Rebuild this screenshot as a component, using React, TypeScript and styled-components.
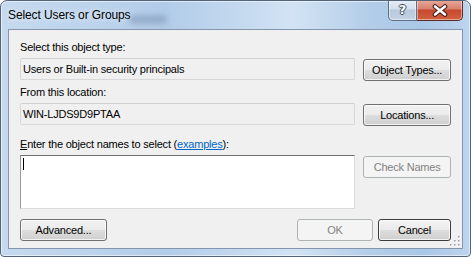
import React from "react";
import styled, { createGlobalStyle } from "styled-components";

const Global = createGlobalStyle`
  html, body { margin: 0; padding: 0; background: #ffffff; }
  body { font-family: "Liberation Sans", Arial, sans-serif; }
  * { box-sizing: border-box; }
`;

const Window = styled.div`
  width: 471px;
  height: 257px;
  border: 1px solid #53657b;
  border-radius: 7px 7px 4px 4px;
  background: linear-gradient(
    to right,
    #c6d9ef 0%,
    #bcd3ec 20%,
    #b1cce9 35%,
    #c9dcf1 55%,
    #d3e3f4 62%,
    #b4cee9 78%,
    #a9c7e7 90%,
    #bdd4ed 100%
  );
  box-shadow: inset 0 0 0 1px rgba(255, 255, 255, 0.55);
  display: flex;
  flex-direction: column;
  overflow: hidden;
`;

const TitleBar = styled.div`
  height: 28px;
  display: flex;
  align-items: flex-start;
  justify-content: space-between;
  padding: 0 7px 0 7px;
  position: relative;
`;

const TitleText = styled.div`
  font-size: 12px;
  letter-spacing: -0.1px;
  color: #000;
  line-height: 14px;
  padding-top: 7px;
  text-shadow: 0 0 6px rgba(255, 255, 255, 0.9);
`;

const Smudge = styled.div`
  position: absolute;
  left: 128px;
  top: 15px;
  width: 38px;
  height: 7px;
  border-radius: 4px;
  background: rgba(70, 90, 120, 0.35);
  filter: blur(3px);
`;

const CaptionGroup = styled.div`
  display: flex;
  margin-top: -1px;
`;

const CaptionButton = styled.div<{ $variant: "help" | "close" }>`
  height: 21px;
  width: ${(p) => (p.$variant === "help" ? "29px" : "46px")};
  display: flex;
  align-items: center;
  justify-content: center;
  border: 1px solid ${(p) => (p.$variant === "help" ? "#5e7089" : "#5b2c24")};
  border-top: none;
  border-left: ${(p) => (p.$variant === "help" ? "1px solid #5e7089" : "none")};
  border-radius: ${(p) => (p.$variant === "help" ? "0 0 0 5px" : "0 0 5px 0")};
  background: ${(p) =>
    p.$variant === "help"
      ? "linear-gradient(to bottom, #e6eef7 0%, #d3dfed 45%, #b9c9dd 50%, #c3d2e4 100%)"
      : "linear-gradient(to bottom, #e9a99b 0%, #d9806e 45%, #c8472f 50%, #d2613f 100%)"};
  box-shadow: inset 0 0 0 1px rgba(255, 255, 255, 0.45);
`;

const HelpGlyph = styled.span`
  font-family: "DejaVu Sans", sans-serif;
  font-weight: bold;
  font-size: 13px;
  line-height: 13px;
  color: #ffffff;
  text-shadow: 1px 0 0 #3d4a5c, -1px 0 0 #3d4a5c, 0 1px 0 #3d4a5c, 0 -1px 0 #3d4a5c;
  margin-top: -1px;
`;

const Client = styled.div`
  margin: 0 7px 7px 7px;
  height: 220px;
  border: 1px solid #8396ae;
  background: #f0f0f0;
  padding: 10px 11px 0 11px;
  display: flex;
  flex-direction: column;
  position: relative;
`;

const Label = styled.div<{ $top?: number }>`
  font-size: 11px;
  letter-spacing: -0.2px;
  line-height: 15px;
  height: 15px;
  color: #000;
  margin-top: ${(p) => p.$top ?? 0}px;
  margin-bottom: 3px;
  white-space: nowrap;
`;

const AccessKey = styled.span`
  text-decoration: underline;
`;

const Link = styled.span`
  color: #0066cc;
  text-decoration: underline;
`;

const Row = styled.div`
  display: flex;
  align-items: flex-start;
  gap: 8px;
`;

const ReadOnlyBox = styled.div`
  width: 336px;
  height: 22px;
  border: 1px solid #d8d8d8;
  border-top-color: #d0d0d0;
  border-radius: 2px;
  background: #f0f0f0;
  font-size: 11px;
  letter-spacing: -0.2px;
  line-height: 20px;
  padding-left: 2px;
  color: #000;
  white-space: nowrap;
`;

const Button = styled.div<{ $w: number; $disabled?: boolean; $default?: boolean; $offset?: number }>`
  width: ${(p) => p.$w}px;
  height: 22px;
  margin-top: ${(p) => p.$offset ?? 0}px;
  display: flex;
  align-items: center;
  justify-content: center;
  font-size: 11px;
  letter-spacing: -0.2px;
  border-radius: 3px;
  border: 1px solid
    ${(p) => (p.$disabled ? "#adb2b5" : p.$default ? "#3c3c3c" : "#707070")};
  color: ${(p) => (p.$disabled ? "#838383" : "#000")};
  background: ${(p) =>
    p.$disabled
      ? "#f4f4f4"
      : "linear-gradient(to bottom, #f2f2f2 0%, #ebebeb 48%, #dddddd 52%, #cfcfcf 100%)"};
  box-shadow: ${(p) =>
    p.$disabled ? "none" : "inset 0 0 0 1px rgba(255, 255, 255, 0.75)"};
  white-space: nowrap;
`;

const NamesBox = styled.div`
  width: 336px;
  height: 54px;
  background: #ffffff;
  border-top: 1px solid #6f6f6f;
  border-left: 1px solid #9a9a9a;
  border-right: 1px solid #dcdcdc;
  border-bottom: 1px solid #dcdcdc;
  padding: 2px 0 0 2px;
`;

const Caret = styled.div`
  width: 1px;
  height: 12px;
  background: #000;
`;

const BottomRow = styled.div`
  display: flex;
  align-items: flex-start;
  margin-top: 10px;
`;

const Spacer = styled.div`
  flex: 1;
`;

const ButtonPair = styled.div`
  display: flex;
  gap: 5px;
`;

const Grip = styled.svg`
  position: absolute;
  right: 2px;
  bottom: 2px;
`;

const gripDots = [
  [8, 0],
  [8, 4],
  [4, 4],
  [8, 8],
  [4, 8],
  [0, 8],
];

export default function App() {
  return (
    <>
      <Global />
      <Window>
        <TitleBar>
          <TitleText>Select Users or Groups</TitleText>
          <Smudge />
          <CaptionGroup>
            <CaptionButton $variant="help">
              <HelpGlyph>?</HelpGlyph>
            </CaptionButton>
            <CaptionButton $variant="close">
              <svg width="16" height="13" viewBox="0 0 16 13">
                <path
                  d="M3 2.5 L13 10.5 M13 2.5 L3 10.5"
                  stroke="#3b1d17"
                  strokeWidth="4.6"
                  strokeLinecap="round"
                />
                <path
                  d="M3 2.5 L13 10.5 M13 2.5 L3 10.5"
                  stroke="#ffffff"
                  strokeWidth="2.6"
                  strokeLinecap="round"
                />
              </svg>
            </CaptionButton>
          </CaptionGroup>
        </TitleBar>
        <Client>
          <Label>Select this object type:</Label>
          <Row>
            <ReadOnlyBox>Users or Built-in security principals</ReadOnlyBox>
            <Button $w={88} $offset={1}>Object Types...</Button>
          </Row>
          <Label $top={4}>From this location:</Label>
          <Row>
            <ReadOnlyBox>WIN-LJDS9D9PTAA</ReadOnlyBox>
            <Button $w={88} $offset={1}>Locations...</Button>
          </Row>
          <Label $top={11}>
            <AccessKey>E</AccessKey>nter the object names to select (<Link>examples</Link>):
          </Label>
          <Row>
            <NamesBox>
              <Caret />
            </NamesBox>
            <Button $w={88} $offset={1} $disabled>
              Check Names
            </Button>
          </Row>
          <BottomRow>
            <Button $w={87}>Advanced...</Button>
            <Spacer />
            <ButtonPair>
              <Button $w={76} $disabled>
                OK
              </Button>
              <Button $w={73} $default>
                Cancel
              </Button>
            </ButtonPair>
          </BottomRow>
          <Grip width="10" height="10" viewBox="0 0 10 10">
            {gripDots.map(([x, y], i) => (
              <g key={i}>
                <rect x={x + 1} y={y + 1} width="1.5" height="1.5" fill="#ffffff" />
                <rect x={x} y={y} width="1.5" height="1.5" fill="#9a9a9a" />
              </g>
            ))}
          </Grip>
        </Client>
      </Window>
    </>
  );
}
